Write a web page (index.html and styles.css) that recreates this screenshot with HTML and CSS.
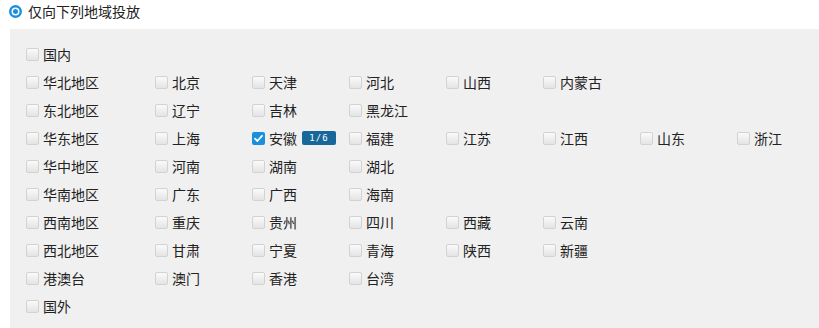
FILE: index.html
```html
<!DOCTYPE html>
<html lang="zh">
<head>
<meta charset="utf-8">
<link rel="stylesheet" href="styles.css">
</head>
<body>
<div class="mode">
  <span class="radio"><span class="radio-dot"></span></span>
  <span class="mode-label">仅向下列地域投放</span>
</div>
<div class="panel">
  <div class="row"><label class="item"><span class="cb"></span>国内</label></div>
  <div class="row">
    <label class="item"><span class="cb"></span>华北地区</label>
    <label class="item"><span class="cb"></span>北京</label>
    <label class="item"><span class="cb"></span>天津</label>
    <label class="item"><span class="cb"></span>河北</label>
    <label class="item"><span class="cb"></span>山西</label>
    <label class="item"><span class="cb"></span>内蒙古</label>
  </div>
  <div class="row">
    <label class="item"><span class="cb"></span>东北地区</label>
    <label class="item"><span class="cb"></span>辽宁</label>
    <label class="item"><span class="cb"></span>吉林</label>
    <label class="item"><span class="cb"></span>黑龙江</label>
  </div>
  <div class="row">
    <label class="item"><span class="cb"></span>华东地区</label>
    <label class="item"><span class="cb"></span>上海</label>
    <label class="item"><span class="cb checked"><svg viewBox="0 0 13 13" width="13" height="13"><path d="M3 6.6 L5.4 9 L10 3.8" fill="none" stroke="#fff" stroke-width="1.8" stroke-linecap="round" stroke-linejoin="round"/></svg></span>安徽<span class="badge">1/6</span></label>
    <label class="item"><span class="cb"></span>福建</label>
    <label class="item"><span class="cb"></span>江苏</label>
    <label class="item"><span class="cb"></span>江西</label>
    <label class="item"><span class="cb"></span>山东</label>
    <label class="item"><span class="cb"></span>浙江</label>
  </div>
  <div class="row">
    <label class="item"><span class="cb"></span>华中地区</label>
    <label class="item"><span class="cb"></span>河南</label>
    <label class="item"><span class="cb"></span>湖南</label>
    <label class="item"><span class="cb"></span>湖北</label>
  </div>
  <div class="row">
    <label class="item"><span class="cb"></span>华南地区</label>
    <label class="item"><span class="cb"></span>广东</label>
    <label class="item"><span class="cb"></span>广西</label>
    <label class="item"><span class="cb"></span>海南</label>
  </div>
  <div class="row">
    <label class="item"><span class="cb"></span>西南地区</label>
    <label class="item"><span class="cb"></span>重庆</label>
    <label class="item"><span class="cb"></span>贵州</label>
    <label class="item"><span class="cb"></span>四川</label>
    <label class="item"><span class="cb"></span>西藏</label>
    <label class="item"><span class="cb"></span>云南</label>
  </div>
  <div class="row">
    <label class="item"><span class="cb"></span>西北地区</label>
    <label class="item"><span class="cb"></span>甘肃</label>
    <label class="item"><span class="cb"></span>宁夏</label>
    <label class="item"><span class="cb"></span>青海</label>
    <label class="item"><span class="cb"></span>陕西</label>
    <label class="item"><span class="cb"></span>新疆</label>
  </div>
  <div class="row">
    <label class="item"><span class="cb"></span>港澳台</label>
    <label class="item"><span class="cb"></span>澳门</label>
    <label class="item"><span class="cb"></span>香港</label>
    <label class="item"><span class="cb"></span>台湾</label>
  </div>
  <div class="row"><label class="item"><span class="cb"></span>国外</label></div>
</div>
</body>
</html>
```
FILE: styles.css
```css
html, body {
  margin: 0;
  padding: 0;
  background: #fff;
}
body {
  font-family: "Noto Sans CJK SC", "Microsoft YaHei", sans-serif;
  font-size: 14px;
  color: #222;
}
.mode {
  display: flex;
  align-items: center;
  height: 22px;
  padding-left: 9px;
  gap: 6px;
}
.radio {
  width: 13px;
  height: 13px;
  border-radius: 50%;
  background: #1a8fe0;
  display: flex;
  align-items: center;
  justify-content: center;
}
.radio-dot {
  width: 5px;
  height: 5px;
  border-radius: 50%;
  background: #1a8fe0;
  box-shadow: 0 0 0 1.5px #fff;
}
.mode-label {
  line-height: 22px;
}
.panel {
  margin: 7px 0 0 10px;
  background: #f0f0f0;
  padding: 11px 0 20px 16px;
}
.row {
  display: grid;
  grid-template-columns: 129px repeat(7, 97px);
  height: 28px;
  align-items: center;
}
.item {
  display: flex;
  align-items: center;
  gap: 4px;
  white-space: nowrap;
  line-height: 20px;
}
.cb {
  width: 11px;
  height: 11px;
  border: 1px solid #d2d2d2;
  border-radius: 2px;
  background: linear-gradient(#fafafa, #e4e4e4);
  flex: none;
  display: flex;
  align-items: center;
  justify-content: center;
}
.cb.checked {
  width: 13px;
  height: 13px;
  border: none;
  background: #1a8fdc;
}
.badge {
  margin-left: 1px;
  background: #17679a;
  color: #fff;
  font-family: "DejaVu Sans Mono", monospace;
  font-size: 9px;
  line-height: 14px;
  height: 14px;
  width: 34px;
  text-align: center;
  border-radius: 2px;
  letter-spacing: 1px;
}
```
